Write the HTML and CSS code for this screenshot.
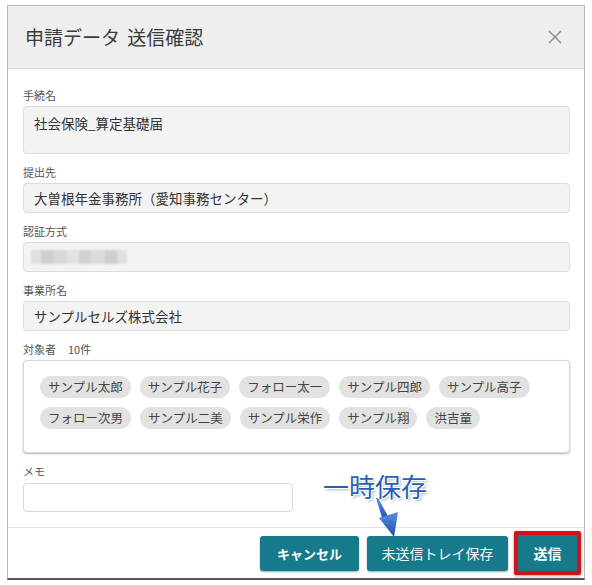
FILE: index.html
```html
<!DOCTYPE html>
<html lang="ja">
<head>
<meta charset="utf-8">
<link rel="stylesheet" href="styles.css">
</head>
<body>
<div class="modal">
  <div class="modal-header">
    <h1 class="title">申請データ 送信確認</h1>
    <svg class="close" width="14" height="14" viewBox="0 0 14 14"><path d="M1 1 L13 13 M13 1 L1 13" stroke="#8a8a8a" stroke-width="1.4" fill="none"/></svg>
  </div>
  <div class="modal-body">
    <div class="field">
      <div class="label">手続名</div>
      <div class="box box-tall">社会保険_算定基礎届</div>
    </div>
    <div class="field">
      <div class="label">提出先</div>
      <div class="box">大曽根年金事務所（愛知事務センター）</div>
    </div>
    <div class="field">
      <div class="label">認証方式</div>
      <div class="box"><span class="mosaic"></span></div>
    </div>
    <div class="field">
      <div class="label">事業所名</div>
      <div class="box">サンプルセルズ株式会社</div>
    </div>
    <div class="field">
      <div class="label">対象者<span class="count">10件</span></div>
      <div class="chips-box">
        <div class="chips">
          <span class="chip">サンプル太郎</span>
          <span class="chip">サンプル花子</span>
          <span class="chip">フォロー太一</span>
          <span class="chip">サンプル四郎</span>
          <span class="chip">サンプル高子</span>
          <span class="chip">フォロー次男</span>
          <span class="chip">サンプル二美</span>
          <span class="chip">サンプル栄作</span>
          <span class="chip">サンプル翔</span>
          <span class="chip">洪吉童</span>
        </div>
      </div>
    </div>
    <div class="field field-last">
      <div class="label">メモ</div>
      <div class="memo"></div>
    </div>
  </div>
  <div class="modal-footer">
    <button class="btn btn-bold">キャンセル</button>
    <button class="btn btn-save">未送信トレイ保存</button>
    <button class="btn btn-bold btn-send">送信</button>
  </div>
</div>
<div class="callout">一時保存</div>
<svg class="arrow" width="40" height="50" viewBox="0 0 40 50">
  <defs>
    <linearGradient id="ag" x1="0" y1="0" x2="0" y2="1">
      <stop offset="0" stop-color="#5a92e6"/>
      <stop offset="1" stop-color="#1a4cab"/>
    </linearGradient>
  </defs>
  <polygon points="6,1 8,1 19,21 13,24" fill="url(#ag)"/>
  <polygon points="9,21 28,15 24,40" fill="url(#ag)"/>
</svg>
</body>
</html>
```
FILE: styles.css
```css
html, body {
  margin: 0;
  padding: 0;
  background: #ffffff;
}
body {
  font-family: "Noto Sans CJK JP", "Noto Sans", sans-serif;
  color: #333;
  position: relative;
  width: 592px;
  height: 585px;
  overflow: hidden;
}
.modal {
  margin: 5px 0 0 7px;
  width: 578px;
  box-sizing: border-box;
  border: 1px solid #b9b9b9;
  border-bottom: 2px solid #555;
  background: #fff;
}
.modal-header {
  height: 62px;
  background: #eeeeee;
  border-bottom: 1px solid #d6d6d6;
  display: flex;
  align-items: center;
  justify-content: space-between;
  padding: 0 22px 0 17px;
}
.title {
  margin: 0;
  font-size: 19px;
  font-weight: normal;
  color: #3a3a3a;
  line-height: 24px;
  word-spacing: 3px;
}
.close {
  display: block;
}
.modal-body {
  padding: 18px 14px 15px 15px;
}
.field {
  margin-bottom: 10px;
}
.field-last {
  margin-bottom: 0;
}
.label {
  font-size: 11px;
  line-height: 16px;
  color: #555;
  margin-bottom: 3px;
}
.count {
  margin-left: 12px;
}
.box {
  box-sizing: border-box;
  height: 30px;
  background: #f3f3f3;
  border: 1px solid #dcdcdc;
  border-radius: 4px;
  padding: 0 10px;
  font-size: 13.5px;
  line-height: 28px;
  color: #333;
  display: flex;
  align-items: center;
}
.box-tall {
  height: 48px;
  align-items: flex-start;
  padding-top: 6px;
  line-height: 20px;
}
.mosaic {
  display: block;
  width: 96px;
  height: 14px;
  margin-left: -3px;
  background: linear-gradient(90deg, #e0e0e0 0 10px, #cfcfcf 10px 22px, #d8d8d8 22px 36px, #e2e2e2 36px 48px, #d2d2d2 48px 60px, #dadada 60px 74px, #cecece 74px 86px, #e0e0e0 86px 96px);
  filter: blur(0.8px);
}
.chips-box {
  box-sizing: border-box;
  height: 93px;
  border: 1px solid #d8d8d8;
  border-radius: 4px;
  box-shadow: 0 1px 2px rgba(0, 0, 0, 0.28);
  padding: 15px 16px 0 16px;
  background: #fff;
}
.chips {
  display: flex;
  flex-wrap: wrap;
  gap: 9px 9px;
  width: 500px;
}
.chip {
  height: 22px;
  line-height: 22px;
  padding: 0 8px;
  border-radius: 11px;
  background: #e2e2e2;
  color: #444;
  font-size: 12.5px;
  white-space: nowrap;
}
.memo {
  box-sizing: border-box;
  width: 270px;
  height: 29px;
  border: 1px solid #d8d8d8;
  border-radius: 4px;
  background: #fff;
  margin-top: 4px;
}
.modal-footer {
  height: 50px;
  border-top: 1px solid #e2e2e2;
  display: flex;
  align-items: center;
  justify-content: flex-end;
  padding-right: 3px;
}
.btn {
  font-family: "Noto Sans CJK JP", "Noto Sans", sans-serif;
  background: #177a8a;
  color: #f2f7f8;
  border: none;
  border-radius: 3px;
  height: 35px;
  font-size: 14px;
  padding: 0;
  box-shadow: 0 1px 2px rgba(0, 0, 0, 0.35);
}
.btn-bold {
  font-weight: bold;
  color: #fff;
  font-size: 13px;
}
.btn:first-child {
  width: 99px;
}
.btn-save {
  width: 141px;
  margin-left: 8px;
}
.btn-send {
  box-sizing: border-box;
  width: 67px;
  height: 44px;
  margin-left: 6px;
  border: 4px solid #d4101c;
  border-radius: 2px;
  font-size: 14px;
  box-shadow: 0 1px 3px rgba(0, 0, 0, 0.4);
}
.callout {
  position: absolute;
  left: 323px;
  top: 469px;
  font-size: 26px;
  line-height: 34px;
  color: #2a5fb6;
  text-shadow: 0 0 2px #fff, 1px 1px 0 #fff, -1px -1px 0 #fff, 1px -1px 0 #fff, -1px 1px 0 #fff, 2px 2px 3px rgba(0, 0, 0, 0.35);
}
.arrow {
  position: absolute;
  left: 370px;
  top: 497px;
}
```
